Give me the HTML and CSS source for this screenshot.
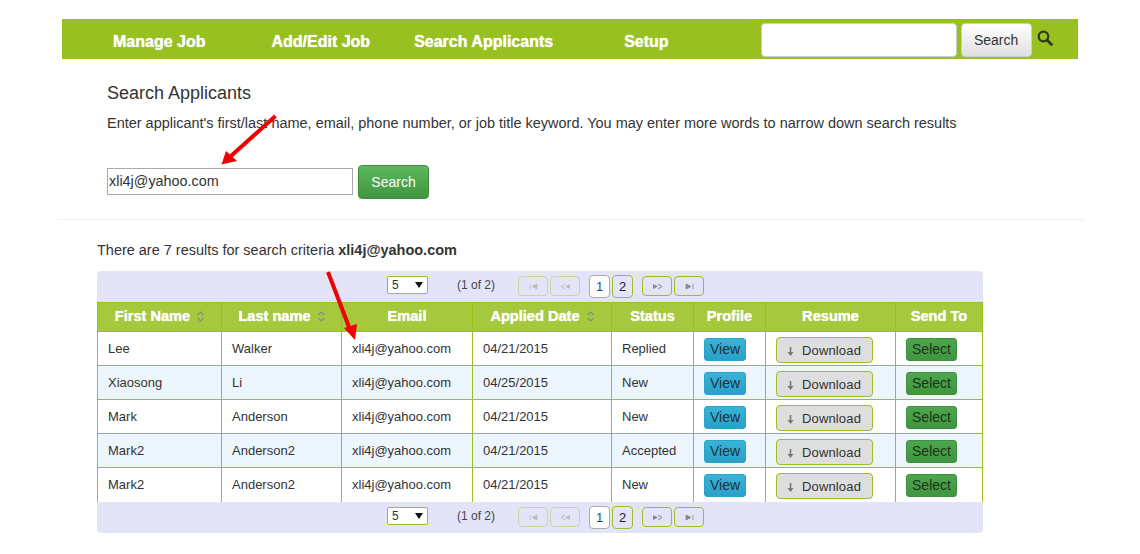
FILE: index.html
```html
<!DOCTYPE html>
<html lang="en">
<head>
<meta charset="UTF-8">
<title>Search Applicants</title>
<link rel="stylesheet" href="styles.css">
</head>
<body>

<div class="nav">
    <a class="nav-link nav-manage">Manage Job</a>
    <a class="nav-link nav-add">Add/Edit Job</a>
    <a class="nav-link nav-search">Search Applicants</a>
    <a class="nav-link nav-setup">Setup</a>
    <input class="nav-input" type="text">
    <button class="nav-btn">Search</button>
    <svg class="nav-icon" width="16" height="16" viewBox="0 0 16 16"><circle cx="6.5" cy="6.500" r="4.800" fill="none" stroke="#2c3a18" stroke-width="2.200"/><path d="M10 10l4.500 4.500" stroke="#2c3a18" stroke-width="2.800" stroke-linecap="round"/></svg>
</div>

<div class="search-box">
    <h3>Search Applicants</h3>
    <p>Enter applicant's first/last name, email, phone number, or job title keyword. You may enter more words to narrow down search results</p>
    <div class="search-row">
        <input class="search-input" type="text" value="xli4j@yahoo.com">
        <button class="search-btn">Search</button>
    </div>
</div>

<hr class="divider">

<div class="results">
    <p class="summary">There are 7 results for search criteria <strong>xli4j@yahoo.com</strong></p>

    <div class="pager pager-top">
        <span class="page-size">5<i class="caret"></i></span>
        <span class="page-count">(1 of 2)</span>
        <span class="page-btn off"><svg width="9" height="7" viewBox="0 0 9 7"><path d="M1 1v5M8 1v5L3 3.500z" fill="#bbb" stroke="#bbb" stroke-width=".8"/></svg></span>
        <span class="page-btn off"><svg width="11" height="7" viewBox="0 0 11 7"><path d="M5 1L1 3.500l4 2.500" fill="none" stroke="#bbb"/><path d="M10 1v5L5 3.500z" fill="#bbb"/></svg></span>
        <span class="page-num current">1</span>
        <span class="page-num">2</span>
        <span class="page-btn gap"><svg width="11" height="7" viewBox="0 0 11 7"><path d="M1 1v5l5-2.500z" fill="#888"/><path d="M6 1l4 2.500L6 6" fill="none" stroke="#888"/></svg></span>
        <span class="page-btn"><svg width="9" height="7" viewBox="0 0 9 7"><path d="M1 1v5l5-2.500zM8 1v5" fill="#888" stroke="#888" stroke-width=".8"/></svg></span>
    </div>

    <table>
        <thead>
            <tr>
                <th class="w-first">First Name <svg class="sort" width="7" height="11" viewBox="0 0 7 11"><path d="M.5 4L3.500 1l3 3M.5 7l3 3 3-3" fill="none" stroke="#7d9080" stroke-width="1.200"/></svg></th>
                <th class="w-last">Last name <svg class="sort" width="7" height="11" viewBox="0 0 7 11"><path d="M.5 4L3.500 1l3 3M.5 7l3 3 3-3" fill="none" stroke="#7d9080" stroke-width="1.200"/></svg></th>
                <th class="w-email">Email</th>
                <th class="w-date">Applied Date <svg class="sort" width="7" height="11" viewBox="0 0 7 11"><path d="M.5 4L3.500 1l3 3M.5 7l3 3 3-3" fill="none" stroke="#7d9080" stroke-width="1.200"/></svg></th>
                <th class="w-status">Status</th>
                <th class="w-profile">Profile</th>
                <th class="w-resume">Resume</th>
                <th>Send To</th>
            </tr>
        </thead>
        <tbody id="rows"></tbody>
    </table>

    <div class="pager pager-bottom">
        <span class="page-size">5<i class="caret"></i></span>
        <span class="page-count">(1 of 2)</span>
        <span class="page-btn off"><svg width="9" height="7" viewBox="0 0 9 7"><path d="M1 1v5M8 1v5L3 3.500z" fill="#bbb" stroke="#bbb" stroke-width=".8"/></svg></span>
        <span class="page-btn off"><svg width="11" height="7" viewBox="0 0 11 7"><path d="M5 1L1 3.500l4 2.500" fill="none" stroke="#bbb"/><path d="M10 1v5L5 3.500z" fill="#bbb"/></svg></span>
        <span class="page-num current">1</span>
        <span class="page-num">2</span>
        <span class="page-btn gap"><svg width="11" height="7" viewBox="0 0 11 7"><path d="M1 1v5l5-2.500z" fill="#888"/><path d="M6 1l4 2.500L6 6" fill="none" stroke="#888"/></svg></span>
        <span class="page-btn"><svg width="9" height="7" viewBox="0 0 9 7"><path d="M1 1v5l5-2.500zM8 1v5" fill="#888" stroke="#888" stroke-width=".8"/></svg></span>
    </div>
</div>

<!-- red annotation arrows drawn over the page -->
<svg class="arrow" width="1140" height="554" viewBox="0 0 1140 554">
    <path d="M275.500 116L231 156" stroke="#f00000" stroke-width="4"/>
    <path d="M221.500 164.500L226 151L237 161z" fill="#f00000"/>
    <path d="M328 272L349 327" stroke="#f00000" stroke-width="4"/>
    <path d="M355 340L344 328L357 324z" fill="#f00000"/>
</svg>

<script>
const applicants = [
    ['Lee', 'Walker', '04/21/2015', 'Replied'],
    ['Xiaosong', 'Li', '04/25/2015', 'New'],
    ['Mark', 'Anderson', '04/21/2015', 'New'],
    ['Mark2', 'Anderson2', '04/21/2015', 'Accepted'],
    ['Mark2', 'Anderson2', '04/21/2015', 'New']
];

document.getElementById('rows').innerHTML = applicants.map(a => `
    <tr>
        <td>${a[0]}</td>
        <td>${a[1]}</td>
        <td>xli4j@yahoo.com</td>
        <td>${a[2]}</td>
        <td>${a[3]}</td>
        <td><span class="btn-view">View</span></td>
        <td><span class="btn-download"><svg width="7" height="9" viewBox="0 0 7 9"><path d="M3.500 0v6" stroke="#777" stroke-width="1.600"/><path d="M.5 5h6l-3 4z" fill="#777"/></svg>Download</span></td>
        <td><span class="btn-select">Select</span></td>
    </tr>`).join('');
</script>

</body>
</html>
```

FILE: styles.css
```css
body {
    margin: 0;
    padding-top: 19px;
    font-family: "Liberation Sans", Arial, sans-serif;
    font-size: 14px;
    color: #333;
    background: #fff;
}
.nav {
    display: flex;
    align-items: center;
    height: 40px;
    margin: 0 62px;
    background: #97c020;
}
.nav-link {
    margin-top: 5px;
    font-size: 16px;
    font-weight: bold;
    color: #fff;
    text-shadow: 0 0 1px #fff;
}
.nav-manage { margin-left: 51px; }
.nav-add { margin-left: 66px; }
.nav-search { margin-left: 44px; }
.nav-setup { margin-left: 71px; }
.nav-input {
    box-sizing: border-box;
    width: 196px;
    height: 34px;
    margin: 2px 0 0 92px;
    border: 1px solid #ccc;
    border-radius: 4px;
    background: #fff;
}
.nav-btn {
    box-sizing: border-box;
    width: 71px;
    height: 34px;
    margin: 2px 0 0 4px;
    border: 1px solid #ccc;
    border-radius: 4px;
    background: linear-gradient(#fff, #e0e0e0);
    font: 14px "Liberation Sans", Arial, sans-serif;
    color: #333;
}
.nav-icon {
    margin: -3px 0 0 5px;
}
.search-box {
    padding: 24px 0 0 107px;
}
h3 {
    margin: 0;
    font-size: 18px;
    font-weight: normal;
    line-height: 20px;
    color: #333;
}
.search-box p {
    margin: 10px 0 0;
    font-size: 14.470px;
    line-height: 20px;
}
.search-row {
    display: flex;
    align-items: center;
    margin-top: 32px;
}
.search-input {
    box-sizing: border-box;
    width: 246px;
    height: 27px;
    margin-top: -2px;
    padding: 0 1px;
    border: 1px solid #aaa;
    font: 14.400px "Liberation Sans", Arial, sans-serif;
    color: #333;
}
.search-btn {
    box-sizing: border-box;
    width: 71px;
    height: 34px;
    margin-left: 5px;
    border: 1px solid #3e8f3e;
    border-radius: 4px;
    background: linear-gradient(#5cb85c, #419641);
    font: 14px "Liberation Sans", Arial, sans-serif;
    color: #fff;
}
.divider {
    margin: 20px 57px 0;
    border: 0;
    border-top: 1px solid #eee;
}
.results {
    margin: 0 157px 0 97px;
}
.summary {
    margin: 20px 0 0;
    font-size: 14.470px;
    line-height: 20px;
}
.pager {
    display: flex;
    align-items: center;
    box-sizing: border-box;
    height: 31px;
    padding: 0 0 3px 290px;
    background: #e4e4f8;
    color: #555;
}
.pager-top {
    margin-top: 11px;
    border-radius: 4px 4px 0 0;
}
.pager-bottom {
    border-radius: 0 0 4px 4px;
}
.page-size {
    display: flex;
    align-items: center;
    justify-content: space-between;
    box-sizing: border-box;
    width: 41px;
    height: 18px;
    padding: 0 4px;
    border: 1px solid #97c020;
    border-radius: 2px;
    background: #fff;
    font-size: 12px;
    color: #333;
}
.caret {
    width: 0;
    height: 0;
    border: 4px solid transparent;
    border-top: 6px solid #111;
    border-bottom: 0;
}
.page-count {
    width: 90px;
    padding-left: 29px;
    box-sizing: border-box;
    font-size: 12px;
    color: #445;
}
.page-btn {
    display: flex;
    align-items: center;
    justify-content: center;
    box-sizing: border-box;
    width: 30px;
    height: 20px;
    margin: 2px 2px 0 0;
    border: 1px solid #97c020;
    border-radius: 4px;
}
.page-btn.off {
    border-color: #c6d8a0;
}
.page-btn.gap {
    margin-left: 7px;
}
.page-num {
    display: flex;
    align-items: center;
    justify-content: center;
    box-sizing: border-box;
    width: 21px;
    height: 23px;
    margin: 3px 2px 0 0;
    border: 1px solid #97c020;
    border-radius: 4px;
    font-size: 13px;
    color: #223;
}
.page-num.current {
    margin-left: 7px;
    border-color: #aaa;
    background: #fff;
    color: #1a4a80;
}
table {
    width: 100%;
    border-collapse: separate;
    border-spacing: 0;
    table-layout: fixed;
    font-size: 13px;
    border-left: 1px solid #97c020;
}
th {
    height: 30px;
    padding: 0 0 2px;
    box-sizing: border-box;
    background: #a5c83c;
    border-top: 1px solid #97c020;
    border-right: 1px solid #97c020;
    border-bottom: 1px solid #97c020;
    font-size: 14.600px;
    color: #fff;
    text-shadow: 0 0 1px #fff;
}
td {
    height: 34px;
    padding: 0 10px 1px;
    box-sizing: border-box;
    border-right: 1px solid #97c020;
    border-bottom: 1px solid #97c020;
    background: #fff;
    color: #333;
}
tbody tr:nth-child(even) td {
    background: #eef6fd;
}
tbody tr:last-child td {
    border-bottom: 0;
}
.w-first { width: 124px; }
.w-last { width: 120px; }
.w-email { width: 131px; }
.w-date { width: 139px; }
.w-status { width: 82px; }
.w-profile { width: 72px; }
.w-resume { width: 130px; }
.sort {
    margin-left: 3px;
    vertical-align: -1px;
}
.btn-view, .btn-select {
    display: inline-block;
    box-sizing: border-box;
    height: 23px;
    line-height: 20px;
    margin-top: 2px;
    text-align: center;
    border-radius: 3px;
    font-size: 14px;
    color: #1c3040;
}
.btn-view {
    width: 42px;
    border: 1px solid #28a4c9;
    background: linear-gradient(#39b3d7, #2aa0c8);
}
.btn-select {
    width: 51px;
    border: 1px solid #3e8f3e;
    background: linear-gradient(#4ca64c, #419641);
    color: #1c3318;
}
.btn-download {
    display: inline-block;
    box-sizing: border-box;
    width: 97px;
    height: 26px;
    line-height: 26px;
    margin-top: 3px;
    padding-left: 10px;
    border: 1px solid #97c020;
    border-radius: 4px;
    background: #dedede;
    font-size: 13px;
    letter-spacing: .15px;
    color: #333;
}
.btn-download svg {
    margin-right: 8px;
    vertical-align: -1px;
}
.arrow {
    position: absolute;
    top: 0;
    left: 0;
    pointer-events: none;
}
```
